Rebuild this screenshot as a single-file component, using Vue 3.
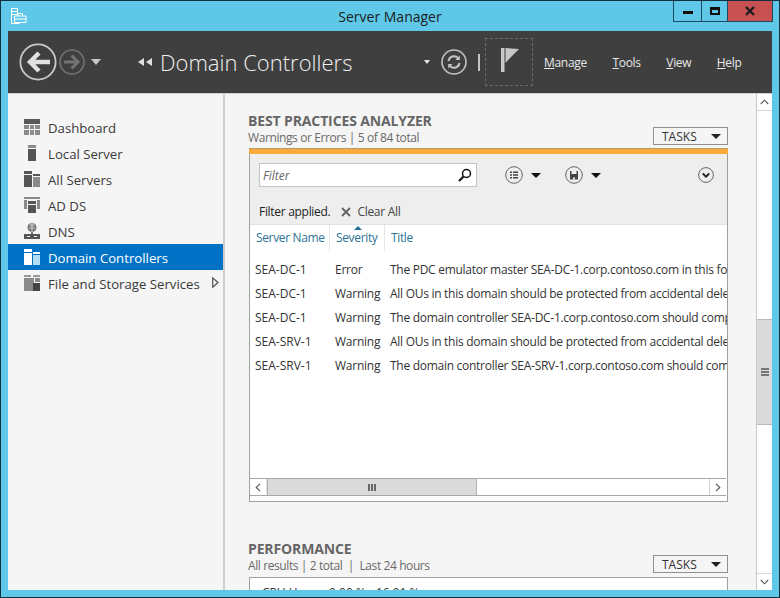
<script setup>
const navItems = [
  { label: 'Dashboard', icon: 'dashboard' },
  { label: 'Local Server', icon: 'local' },
  { label: 'All Servers', icon: 'servers' },
  { label: 'AD DS', icon: 'adds' },
  { label: 'DNS', icon: 'dns' },
  { label: 'Domain Controllers', icon: 'servers', active: true },
  { label: 'File and Storage Services', icon: 'files', more: true },
]

const menus = [
  { key: 'M', rest: 'anage' },
  { key: 'T', rest: 'ools' },
  { key: 'V', rest: 'iew' },
  { key: 'H', rest: 'elp' },
]

const results = [
  { server: 'SEA-DC-1', severity: 'Error', title: 'The PDC emulator master SEA-DC-1.corp.contoso.com in this forest should be configured' },
  { server: 'SEA-DC-1', severity: 'Warning', title: 'All OUs in this domain should be protected from accidental deletion' },
  { server: 'SEA-DC-1', severity: 'Warning', title: 'The domain controller SEA-DC-1.corp.contoso.com should comply with the recommended' },
  { server: 'SEA-SRV-1', severity: 'Warning', title: 'All OUs in this domain should be protected from accidental deletion' },
  { server: 'SEA-SRV-1', severity: 'Warning', title: 'The domain controller SEA-SRV-1.corp.contoso.com should comply with the recommended' },
]
</script>

<template>
  <div class="window">
    <header class="titlebar">
      <svg class="app-icon" width="17" height="18" viewBox="0 0 17 18" fill="none" stroke="#fff">
        <path d="M1.500 1.500h6v6h-6zM1.500 7.500v9h8" />
        <path d="M1.500 4.500h6" />
        <path d="M4.500 15v-6h11.500v6.500h-11.500z" fill="#5fc8e8" />
        <path d="M8 9V6.500h4.500V9M4.500 12h11.500" />
      </svg>
      <span class="title">Server Manager</span>
      <div class="controls">
        <span class="ctl ctl-min"><i class="min-bar"></i></span>
        <span class="ctl ctl-max"><i class="max-box"></i></span>
        <span class="ctl ctl-close">
          <svg width="12" height="10" viewBox="0 0 12 10"><path d="M2 1l8 8M10 1l-8 8" stroke="#1c1c1c" stroke-width="2.400" fill="none" /></svg>
        </span>
      </div>
    </header>

    <div class="frame">
      <section class="toolbar">
        <svg class="back" width="38" height="38" viewBox="0 0 38 38" fill="none">
          <circle cx="19" cy="19" r="17.600" stroke="#c9c9c9" stroke-width="1.800" />
          <path d="M31 19H11M20 10l-9 9 9 9" stroke="#e0e0e0" stroke-width="4.400" />
        </svg>
        <svg class="forward" width="26" height="26" viewBox="0 0 26 26" fill="none">
          <circle cx="13" cy="13" r="12" stroke="#737373" stroke-width="1.600" />
          <path d="M5 13h14M12.500 6.500L19 13l-6.500 6.500" stroke="#737373" stroke-width="3" />
        </svg>
        <i class="caret caret-nav"></i>
        <span class="crumb-arrows">
          <i></i><i></i>
        </span>
        <h1 class="crumb">Domain Controllers</h1>
        <i class="caret caret-small"></i>
        <svg class="refresh" width="26" height="26" viewBox="0 0 26 26" fill="none" stroke="#c4c4c4">
          <circle cx="13" cy="13" r="12" stroke-width="1.600" />
          <path d="M7.500 12a5.500 5.500 0 0 1 9.600-2.800M18.500 14a5.500 5.500 0 0 1-9.600 2.800" stroke-width="2" />
          <path d="M18.800 6.500v4.400h-4.400zM7.200 19.500v-4.400h4.400z" fill="#c4c4c4" stroke="none" />
        </svg>
        <i class="sep"></i>
        <div class="flag-box">
          <svg width="18" height="24" viewBox="0 0 18 24">
            <path d="M0 0h3.500v24H0z" fill="#c8c8c8" />
            <path d="M4.500 0L18 1 8 11l-3.500 4z" fill="#c8c8c8" />
          </svg>
        </div>
        <nav class="menus">
          <a v-for="m in menus" :key="m.key" class="menu"><u>{{ m.key }}</u>{{ m.rest }}</a>
        </nav>
      </section>

      <div class="body">
        <aside class="sidebar">
          <div v-for="item in navItems" :key="item.label" class="nav-item" :class="{ active: item.active }">
            <span class="nav-icon">
              <svg width="16" height="16" viewBox="0 0 16 16">
                <template v-if="item.icon === 'dashboard'">
                  <path d="M0 0h16v5H0z" fill="#5a5a5a" />
                  <path d="M0 6h5v4H0zM6 6h4v4H6zM11 6h5v4h-5zM0 11h5v5H0zM6 11h4v5H6zM11 11h5v5h-5z" fill="#8a8a8a" />
                </template>
                <template v-else-if="item.icon === 'local'">
                  <path d="M4 0h8v3H4z" fill="#8a8a8a" />
                  <path d="M4 4h8v12H4z" fill="#555" />
                </template>
                <template v-else-if="item.icon === 'servers'">
                  <path d="M0 0h8v16H0z" :fill="item.active ? '#fff' : '#555'" />
                  <path d="M0 3h8v1H0z" :fill="item.active ? '#0072c6' : '#f5f5f5'" />
                  <path d="M9 3h7v2H9z" :fill="item.active ? '#fff' : '#555'" />
                  <path d="M9 6h7v10H9z" :fill="item.active ? '#b5dcf5' : '#8a8a8a'" />
                </template>
                <template v-else-if="item.icon === 'adds'">
                  <path d="M0 0h16v2H0zM0 3h3v9H0zM13 3h3v9h-3z" fill="#8a8a8a" />
                  <path d="M4 4h8v12H4z" fill="#555" />
                  <path d="M4 7h8v1H4z" fill="#f5f5f5" />
                </template>
                <template v-else-if="item.icon === 'dns'">
                  <circle cx="8" cy="4.500" r="4.500" fill="#777" />
                  <path d="M5.500 2h5M5 5h6M8 0v9" stroke="#f5f5f5" stroke-width=".7" />
                  <path d="M7 9h2v2H7z" fill="#777" />
                  <path d="M0 11h16v5H0z" fill="#555" />
                  <path d="M3 13h3v1H3zM10 13h3v1h-3z" fill="#f5f5f5" />
                </template>
                <template v-else>
                  <path d="M0 0h7v2H0z" fill="#999" />
                  <path d="M0 3h10v13H0z" fill="#8a8a8a" />
                  <path d="M9 0h7v2H9z" fill="#999" />
                  <path d="M11 3h5v4h-5z" fill="#8a8a8a" />
                  <path d="M9 8h7v8H9z" fill="#444" />
                </template>
              </svg>
            </span>
            <span class="nav-label">{{ item.label }}</span>
            <svg v-if="item.more" class="nav-more" width="7" height="11" viewBox="0 0 7 11" fill="none">
              <path d="M.7 .8l5.300 4.700-5.300 4.700z" stroke="#444" stroke-width="1.100" />
            </svg>
          </div>
        </aside>

        <main class="main">
          <div class="main-scroll">
            <section class="group">
              <div class="group-head">
                <div>
                  <h2>BEST PRACTICES ANALYZER</h2>
                  <p>Warnings or Errors | 5 of 84 total</p>
                </div>
                <button class="tasks" type="button">TASKS<i class="caret caret-dark"></i></button>
              </div>
              <div class="panel panel-bpa">
                <div class="stripe"></div>
                <div class="filters">
                  <div class="filter-row">
                    <div class="filter-input">
                      <span>Filter</span>
                      <svg width="14" height="14" viewBox="0 0 14 14" fill="none" stroke="#111">
                        <circle cx="8.500" cy="5.500" r="4" stroke-width="1.500" />
                        <path d="M5.500 8.500L1 13" stroke-width="2.200" />
                      </svg>
                    </div>
                    <div class="round-btn list-btn">
                      <svg width="18" height="18" viewBox="0 0 18 18" fill="none">
                        <circle cx="9" cy="9" r="8.300" stroke="#666" />
                        <path d="M5 5.500h2v1.500H5zM5 8.300h2v1.500H5zM5 11.100h2v1.500H5z" fill="#444" />
                        <path d="M8 5.500h5v1.500H8zM8 8.300h5v1.500H8zM8 11.100h5v1.500H8z" fill="#444" />
                      </svg>
                      <i class="caret caret-black"></i>
                    </div>
                    <div class="round-btn save-btn">
                      <svg width="18" height="18" viewBox="0 0 18 18" fill="none">
                        <circle cx="9" cy="9" r="8.300" stroke="#666" />
                        <path d="M5 5h8v8.500H5z" fill="#444" />
                        <path d="M6.500 5h5v3h-5zM8 11.500h2v2H8z" fill="#eee" />
                      </svg>
                      <i class="caret caret-black"></i>
                    </div>
                    <svg class="expand" width="16" height="16" viewBox="0 0 16 16" fill="none">
                      <circle cx="8" cy="8" r="7.400" stroke="#666" />
                      <path d="M4.800 6.500L8 9.700l3.200-3.200" stroke="#222" stroke-width="1.800" />
                    </svg>
                  </div>
                  <div class="applied">
                    <span class="applied-label">Filter applied.</span>
                    <svg width="10" height="10" viewBox="0 0 10 10"><path d="M1 1l8 8M9 1L1 9" stroke="#666" stroke-width="1.800" /></svg>
                    <span class="clear">Clear All</span>
                  </div>
                </div>

                <div class="table">
                  <div class="thead">
                    <span class="th th-server">Server Name</span>
                    <span class="th th-severity"><i class="sort"></i>Severity</span>
                    <span class="th th-title">Title</span>
                  </div>
                  <div class="tbody">
                    <div v-for="(r, i) in results" :key="i" class="tr">
                      <span class="td-server">{{ r.server }}</span>
                      <span class="td-severity">{{ r.severity }}</span>
                      <span class="td-title">{{ r.title }}</span>
                    </div>
                  </div>
                </div>

                <div class="hscroll">
                  <span class="hs-btn">
                    <svg width="6" height="9" viewBox="0 0 6 9" fill="none"><path d="M5 .8L1.200 4.500 5 8.200" stroke="#555" stroke-width="1.100" /></svg>
                  </span>
                  <span class="hs-thumb"><i></i><i></i><i></i></span>
                  <span class="hs-track"></span>
                  <span class="hs-btn hs-right">
                    <svg width="6" height="9" viewBox="0 0 6 9" fill="none"><path d="M1 .8l3.800 3.700L1 8.200" stroke="#555" stroke-width="1.100" /></svg>
                  </span>
                </div>
              </div>
            </section>

            <section class="group group-perf">
              <div class="group-head">
                <div>
                  <h2>PERFORMANCE</h2>
                  <p>All results | 2 total &nbsp;|&nbsp; Last 24 hours</p>
                </div>
                <button class="tasks" type="button">TASKS<i class="caret caret-dark"></i></button>
              </div>
              <div class="panel panel-perf">
                <div class="perf-row"><span>CPU Usage</span><span>0.00 % - 16.91 %</span></div>
              </div>
            </section>
          </div>

          <div class="vscroll">
            <span class="vs-btn">
              <svg width="9" height="6" viewBox="0 0 9 6" fill="none"><path d="M.8 5L4.500 1.200 8.200 5" stroke="#555" stroke-width="1.100" /></svg>
            </span>
            <span class="vs-track vs-top"></span>
            <span class="vs-thumb"><i></i><i></i><i></i></span>
            <span class="vs-track"></span>
            <span class="vs-btn vs-bottom">
              <svg width="9" height="6" viewBox="0 0 9 6" fill="none"><path d="M.8 1l3.700 3.800L8.200 1" stroke="#555" stroke-width="1.100" /></svg>
            </span>
          </div>
        </main>
      </div>
    </div>
  </div>
</template>

<style>
html,
body {
  margin: 0;
  background: #0d2a3a;
}
</style>

<style scoped>
.window {
  width: 780px;
  height: 598px;
  box-sizing: border-box;
  border: 1px solid #12303f;
  background: #5fc8e8;
  display: flex;
  flex-direction: column;
  overflow: hidden;
  font-family: "Open Sans", "Noto Sans", sans-serif;
  color: #333;
}

.titlebar {
  height: 30px;
  flex: none;
  position: relative;
  display: flex;
  align-items: center;
  justify-content: center;
}

.app-icon {
  position: absolute;
  left: 9px;
  top: 6px;
}

.title {
  font-size: 14px;
  color: #1b1b1b;
  padding-top: 1px;
}

.controls {
  position: absolute;
  right: 6px;
  top: -1px;
  display: flex;
  height: 22px;
}

.ctl {
  box-sizing: border-box;
  height: 22px;
  border: 1px solid #1c4a5e;
  border-top: none;
  display: flex;
  align-items: center;
  justify-content: center;
}

.ctl-min {
  width: 29px;
}

.ctl-max {
  width: 26px;
  border-left: none;
}

.ctl-close {
  width: 45px;
  border-left: none;
  background: #c75050;
}

.min-bar {
  display: block;
  width: 10px;
  height: 3px;
  background: #111;
  margin-top: 4px;
}

.max-box {
  display: block;
  box-sizing: border-box;
  width: 10px;
  height: 8px;
  border: 2px solid #111;
  border-top-width: 3px;
}

.frame {
  flex: 1;
  margin: 0 7px 7px;
  display: flex;
  flex-direction: column;
  min-height: 0;
}

.toolbar {
  height: 62px;
  flex: none;
  background: #3f3f3f;
  border-bottom: 1px solid #d0d0d0;
  display: flex;
  align-items: center;
  position: relative;
}

.back {
  margin-left: 11px;
}

.forward {
  margin-left: 2px;
}

.caret {
  display: block;
  width: 0;
  height: 0;
  border-style: solid;
  border-color: transparent;
}

.caret-nav {
  margin-left: 6px;
  border-width: 6px 5px 0;
  border-top-color: #c8c8c8;
}

.crumb-arrows {
  display: flex;
  gap: 2px;
  margin-left: 37px;
}

.crumb-arrows i {
  display: block;
  width: 0;
  height: 0;
  border-style: solid;
  border-width: 4.500px 6px 4.500px 0;
  border-color: transparent #e0e0e0 transparent transparent;
}

.crumb {
  margin: 0 0 0 8px;
  font-size: 22px;
  font-weight: 300;
  color: #f0f0f0;
  white-space: nowrap;
  width: 264px;
}

.caret-small {
  border-width: 4px 3.500px 0;
  border-top-color: #e8e8e8;
}

.refresh {
  margin-left: 11px;
}

.sep {
  display: block;
  width: 2px;
  height: 17px;
  background: #c4c4c4;
  margin-left: 11px;
}

.flag-box {
  box-sizing: border-box;
  width: 48px;
  height: 48px;
  margin-left: 5px;
  border: 1px dashed #6a6a6a;
  padding: 9px 0 0 15px;
}

.menus {
  display: flex;
  margin-left: 11px;
  gap: 25.500px;
}

.menu {
  font-size: 12px;
  color: #e8e8e8;
  letter-spacing: -0.3px;
}

.body {
  flex: 1;
  display: flex;
  min-height: 0;
}

.sidebar {
  width: 215px;
  flex: none;
  box-sizing: content-box;
  background: #f5f5f5;
  border-right: 2px solid #cfcfcf;
  padding-top: 20px;
}

.nav-item {
  height: 26px;
  display: flex;
  align-items: center;
  padding-left: 16px;
  font-size: 13.200px;
  color: #3a3a3a;
  position: relative;
}

.nav-item.active {
  background: #0072c6;
  color: #fff;
}

.nav-icon {
  width: 16px;
  height: 16px;
  display: block;
  margin-right: 8px;
}

.nav-icon svg {
  display: block;
}

.nav-label {
  padding-top: 2px;
}

.nav-more {
  position: absolute;
  left: 204px;
  top: 7px;
}

.main {
  flex: 1;
  min-width: 0;
  display: flex;
  background: #f5f5f5;
}

.main-scroll {
  flex: 1;
  min-width: 0;
  overflow: hidden;
  padding: 19px 28px 0 23px;
}

.group-head {
  display: flex;
  justify-content: space-between;
  align-items: flex-end;
  padding-bottom: 2px;
}

h2 {
  margin: 0;
  font-size: 14px;
  line-height: 16px;
  font-weight: 700;
  color: #666;
  letter-spacing: -0.13px;
}

.group-head p {
  margin: 0;
  font-size: 12px;
  line-height: 17px;
  color: #6a6a6a;
  letter-spacing: -0.4px;
}

.tasks {
  box-sizing: border-box;
  width: 75px;
  height: 18px;
  padding: 0 6px 0 8px;
  border: 1px solid #8f8f8f;
  background: #f5f5f5;
  font: inherit;
  font-size: 12px;
  color: #333;
  display: flex;
  align-items: center;
  justify-content: space-between;
  margin-bottom: 1px;
}

.caret-dark {
  border-width: 5px 5px 0;
  border-top-color: #222;
}

.panel {
  margin-left: 1px;
  background: #fff;
  border: 1px solid #a0a0a0;
  border-top: none;
}

.panel-bpa {
  height: 354px;
  box-sizing: border-box;
  display: flex;
  flex-direction: column;
}

.stripe {
  height: 5px;
  background: #f9ab3c;
  border-top: 1px solid #b59a70;
  margin: 0 -1px;
  flex: none;
}

.filters {
  height: 70px;
  flex: none;
  background: #eeeeee;
  border-bottom: 1px solid #e2e2e2;
  position: relative;
}

.filter-row {
  display: flex;
  align-items: center;
  padding: 9px 0 0 9px;
}

.filter-input {
  box-sizing: border-box;
  width: 218px;
  height: 24px;
  border: 1px solid #c4c4c4;
  background: #fff;
  display: flex;
  align-items: center;
  justify-content: space-between;
  padding: 0 4px 0 3px;
  font-size: 12px;
  font-style: italic;
  color: #666;
}

.round-btn {
  display: flex;
  align-items: center;
  gap: 8px;
}

.round-btn svg {
  display: block;
}

.list-btn {
  margin-left: 28px;
}

.save-btn {
  margin-left: 24px;
}

.caret-black {
  border-width: 5px 5px 0;
  border-top-color: #111;
}

.expand {
  margin-left: 97px;
}

.applied {
  display: flex;
  align-items: center;
  padding: 16px 0 0 9px;
  font-size: 12px;
  color: #222;
  letter-spacing: -0.3px;
}

.applied svg {
  margin-left: 11px;
  margin-right: 6px;
}

.clear {
  color: #444;
}

.table {
  flex: 1;
  min-height: 0;
  overflow: hidden;
}

.thead {
  height: 26px;
  display: flex;
  font-size: 12px;
  color: #2a7396;
  letter-spacing: -0.35px;
}

.th {
  box-sizing: border-box;
  height: 26px;
  line-height: 26px;
  padding-left: 6px;
  border-right: 1px solid #e6e6e6;
  position: relative;
  white-space: nowrap;
}

.th-server {
  width: 80px;
}

.th-severity {
  width: 55px;
}

.th-title {
  border-right: none;
}

.sort {
  position: absolute;
  left: 24px;
  top: 1px;
  width: 0;
  height: 0;
  border-style: solid;
  border-width: 0 4px 4px;
  border-color: transparent transparent #1f6f96;
}

.tbody {
  padding-top: 6px;
}

.tr {
  height: 24px;
  display: flex;
  align-items: center;
  font-size: 12px;
  color: #333;
  white-space: nowrap;
}

.td-server {
  width: 85px;
  flex: none;
  padding-left: 5px;
  box-sizing: border-box;
}

.td-severity {
  width: 55px;
  flex: none;
  letter-spacing: -0.25px;
}

.td-title {
  flex: none;
  letter-spacing: -0.28px;
}

.hscroll {
  flex: none;
  height: 18px;
  margin: 0 1px 5px 0;
  display: flex;
  border-top: 1px solid #a8a8a8;
  border-bottom: 1px solid #a8a8a8;
  box-sizing: border-box;
  background: #fff;
}

.hs-btn {
  width: 17px;
  flex: none;
  display: flex;
  align-items: center;
  justify-content: center;
  box-sizing: border-box;
  border-right: 1px solid #e2e2e2;
}

.hs-right {
  border-right: none;
  border-left: 1px solid #d0d0d0;
}

.hs-thumb {
  width: 210px;
  flex: none;
  box-sizing: border-box;
  background: #dadada;
  border: 1px solid #b0b0b0;
  border-width: 0 1px;
  display: flex;
  align-items: center;
  justify-content: center;
  gap: 1px;
}

.hs-thumb i {
  display: block;
  width: 2px;
  height: 7px;
  background: #666;
}

.hs-track {
  flex: 1;
}

.group-perf {
  margin-top: 39px;
}

.group-perf .group-head {
  padding-bottom: 3px;
}

.panel-perf {
  border-top: 1px solid #a0a0a0;
  height: 40px;
  overflow: hidden;
}

.perf-row {
  display: flex;
  gap: 6px;
  padding: 7px 0 0 12px;
  font-size: 12px;
  line-height: 16px;
  color: #333;
}

.vscroll {
  width: 16px;
  flex: none;
  display: flex;
  flex-direction: column;
  background: #fff;
  border-left: 1px solid #c8c8c8;
  box-sizing: border-box;
}

.vs-btn {
  height: 17px;
  flex: none;
  display: flex;
  align-items: center;
  justify-content: center;
  border-bottom: 1px solid #d8d8d8;
  box-sizing: border-box;
}

.vs-bottom {
  border-bottom: none;
  border-top: 1px solid #d8d8d8;
}

.vs-track {
  flex: 1;
}

.vs-top {
  flex: none;
  height: 208px;
}

.vs-thumb {
  height: 106px;
  flex: none;
  background: #dadada;
  border: 1px solid #b8b8b8;
  border-width: 1px 0;
  box-sizing: border-box;
  display: flex;
  flex-direction: column;
  align-items: center;
  justify-content: center;
  gap: 1px;
}

.vs-thumb i {
  display: block;
  width: 8px;
  height: 2px;
  background: #777;
}
</style>
